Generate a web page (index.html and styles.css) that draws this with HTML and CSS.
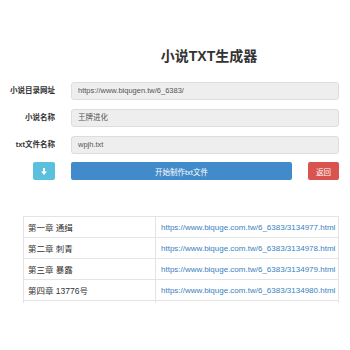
FILE: index.html
```html
<!DOCTYPE html>
<html lang="zh-CN">
  <head>
    <meta charset="UTF-8" />
    <meta name="viewport" content="width=device-width, initial-scale=1.0" />
    <title>小说TXT生成器</title>
    <link rel="stylesheet" href="styles.css">
  </head>
  <body>
    <div class="form">
      <div></div>
      <h1 class="title">小说TXT生成器</h1>

      <label class="label">小说目录网址</label>
      <div class="input">https://www.biqugen.tw/6_6383/</div>

      <label class="label">小说名称</label>
      <div class="input">王牌进化</div>

      <label class="label">txt文件名称</label>
      <div class="input">wpjh.txt</div>

      <button class="btn btn-info btn-down">
        <svg width="6" height="7" viewBox="0 0 6 7">
          <path d="M2 0h2v3.5h2L3 7 0 3.5h2z" fill="#fff" />
        </svg>
      </button>
      <div class="actions">
        <button class="btn btn-primary btn-start">开始制作txt文件</button>
        <button class="btn btn-danger btn-back">返回</button>
      </div>
    </div>

    <!-- chapter list -->
    <div class="list">
      <table class="chapters">
        <tr>
          <td>第一章 通缉</td>
          <td><a href="#">https://www.biquge.com.tw/6_6383/3134977.html</a></td>
        </tr>
        <tr>
          <td>第二章 刺青</td>
          <td><a href="#">https://www.biquge.com.tw/6_6383/3134978.html</a></td>
        </tr>
        <tr>
          <td>第三章 暴露</td>
          <td><a href="#">https://www.biquge.com.tw/6_6383/3134979.html</a></td>
        </tr>
        <tr>
          <td>第四章 13776号</td>
          <td><a href="#">https://www.biquge.com.tw/6_6383/3134980.html</a></td>
        </tr>
        <tr>
          <td>&nbsp;</td>
          <td>&nbsp;</td>
        </tr>
      </table>
    </div>
  </body>
</html>
```

FILE: styles.css
```css
* {
  margin: 0;
  padding: 0;
  box-sizing: border-box;
}

body {
  background: #fff;
  font-family: "Liberation Sans", "Noto Sans CJK SC", sans-serif;
  color: #333;
}

.form {
  display: grid;
  grid-template-columns: 55px 1fr;
  column-gap: 16px;
  row-gap: 9px;
  padding: 46px 11px 0 0;
}

.title {
  font-size: 14px;
  line-height: 20px;
  font-weight: 700;
  text-align: center;
  padding-left: 8px;
  margin-bottom: 7px;
}

.label {
  font-size: 7.5px;
  font-weight: 700;
  line-height: 18px;
  text-align: right;
}

.input {
  height: 18px;
  line-height: 16px;
  padding: 0 6px;
  font-size: 7.5px;
  color: #555;
  background: #eee;
  border: 1px solid #ddd;
  border-radius: 3px;
}

.btn {
  height: 18px;
  border: none;
  border-radius: 2px;
  color: #fff;
  font-family: inherit;
  font-size: 7.5px;
  cursor: pointer;
}

.btn-info { background: #5bc0de; }
.btn-primary { background: #428bca; }
.btn-danger { background: #d9534f; }

.btn-down {
  width: 22px;
  justify-self: end;
  display: flex;
  align-items: center;
  justify-content: center;
  margin-top: -1px;
}

.actions {
  display: flex;
  gap: 16px;
  margin-top: -1px;
}

.btn-start { flex: 1; }
.btn-back { width: 31px; }

.list {
  margin: 36px 11px 0 23px;
  height: 87px;
  overflow: hidden;
}

.chapters {
  width: 100%;
  border-collapse: collapse;
  table-layout: fixed;
}

.chapters td {
  height: 21px;
  border: 1px solid #e4e4e4;
  font-size: 8.5px;
  padding: 0 4px;
  white-space: nowrap;
  overflow: hidden;
}

.chapters td:first-child { width: 132px; }

.chapters td:last-child { padding-left: 5px; }

.chapters a {
  font-size: 8px;
  color: #3a7fc0;
  text-decoration: none;
}
```
